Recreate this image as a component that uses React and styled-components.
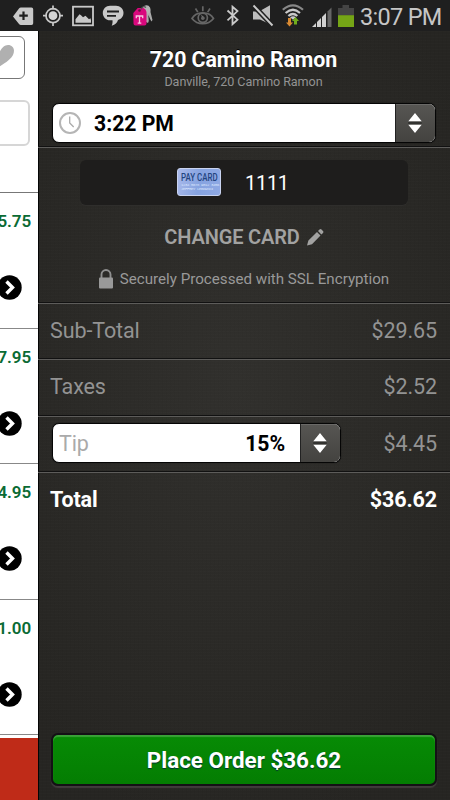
import React from 'react'
import styled, { createGlobalStyle } from 'styled-components'

const GlobalStyle = createGlobalStyle`
  * {
    box-sizing: border-box;
  }
  body {
    margin: 0;
    background: #1e1e1e;
    font-family: Roboto, 'Liberation Sans', sans-serif;
  }
`

const Screen = styled.div`
  width: 450px;
  height: 800px;
  overflow: hidden;
  display: flex;
  flex-direction: column;
`

const StatusBar = styled.header`
  height: 31px;
  flex: none;
  display: flex;
  align-items: flex-start;
  background: #1f1f1f;
  padding-left: 12px;
`

const StatusIcon = styled.svg`
  display: block;
  flex: none;
  width: ${({ $w }) => $w}px;
  height: 31px;
  margin-right: ${({ $gap }) => $gap}px;
`

const Clock = styled.span`
  font-size: 23.5px;
  line-height: 34px;
  color: #c6c6c6;
  white-space: nowrap;
  letter-spacing: -0.7px;
`

const Body = styled.div`
  flex: 1;
  min-height: 0;
  display: flex;
`

const Drawer = styled.aside`
  width: 38px;
  flex: none;
  overflow: hidden;
  background: #fff;
  display: flex;
  flex-direction: column;
`

const DrawerTop = styled.div`
  height: 162px;
  flex: none;
  padding-top: 5px;
  border-bottom: 1px solid #777;
`

const FavButton = styled.div`
  width: 36px;
  height: 43px;
  margin-left: -11px;
  border: 1px solid #777;
  border-radius: 6px;
  display: flex;
  justify-content: flex-end;
  padding: 8px 10px 0 0;
`

const SearchField = styled.div`
  width: 50px;
  height: 46px;
  margin: 21px 0 0 -20px;
  border: 2px solid #d6d6d6;
  border-radius: 6px;
`

const Item = styled.div`
  height: 135.5px;
  flex: none;
  display: flex;
  flex-direction: column;
  align-items: flex-end;
  border-bottom: 1px solid #888;
  padding: 17px 7px 0 0;
`

const Price = styled.div`
  font-size: 17px;
  line-height: 23px;
  font-weight: 600;
  letter-spacing: -0.1px;
  color: #0a6b34;
  white-space: nowrap;
`

const ArrowIcon = styled.svg`
  display: block;
  width: 25px;
  height: 25px;
  margin: 42px 9px 0 0;
  flex: none;
`

const DrawerFooter = styled.div`
  flex: 1;
  margin-top: 3px;
  background: #bf2b18;
`

const Panel = styled.main`
  flex: 1;
  display: flex;
  flex-direction: column;
  box-shadow: inset 1px 0 0 #050505;
  background-color: #2a2926;
  background-image: repeating-linear-gradient(0deg, rgba(255, 255, 255, 0.008) 0 1px, transparent 1px 3px),
    repeating-linear-gradient(90deg, rgba(0, 0, 0, 0.025) 0 1px, transparent 1px 4px),
    radial-gradient(ellipse 70% 60% at 48% 46%, #31302d, #262522);
`

const Section = styled.section`
  height: ${({ $h }) => $h}px;
  flex: none;
  display: flex;
  flex-direction: column;
  align-items: center;
  border-bottom: 1px solid #111;
  box-shadow: 0 1px 0 #5d5c5a;
`

const Title = styled.h1`
  margin: 14px 0 0;
  padding-right: 1px;
  font-size: 21.4px;
  line-height: 29px;
  font-weight: 700;
  color: #fff;
  text-shadow: 0 -1px 0 #000;
  letter-spacing: -0.1px;
`

const Subtitle = styled.div`
  padding-right: 1px;
  font-size: 12.6px;
  line-height: 16px;
  color: #939393;
  letter-spacing: -0.08px;
`

const Select = styled.div`
  width: ${({ $w }) => $w}px;
  height: 40px;
  display: flex;
  border: 1px solid #050505;
  border-radius: 7px;
  overflow: hidden;
  background: #fff;
  box-shadow: 0 0 1px #000;
`

const TimeSelect = styled(Select)`
  margin-top: 13px;
`

const SelectValue = styled.div`
  flex: 1;
  display: flex;
  align-items: center;
  justify-content: ${({ $spread }) => ($spread ? 'space-between' : 'flex-start')};
  padding: 0 ${({ $spread }) => ($spread ? 15 : 0)}px 0 6px;
  font-size: 21.2px;
  font-weight: 700;
  color: #000;
`

const Placeholder = styled.span`
  font-weight: 400;
  font-size: 21.5px;
  color: #aaa;
`

const TimeText = styled.span`
  margin-left: 13px;
  padding-top: 1px;
`

const Stepper = styled.div`
  width: 40px;
  border-left: 1px solid #222;
  background: linear-gradient(#575653, #444340);
  box-shadow: inset 0 1px 0 #6a6967;
  display: flex;
  align-items: center;
  justify-content: center;
  padding-right: 2px;
`

const CardBox = styled.div`
  width: 328px;
  height: 45px;
  margin-top: 13px;
  border-radius: 6px;
  background: #1e1d1c;
  box-shadow: 0 1px 0 #2f2e2c;
  display: flex;
  align-items: center;
  padding-left: 97px;
`

const PayCard = styled.div`
  width: 44px;
  height: 28px;
  margin-top: -1px;
  border: 1px solid #c9d3f0;
  border-radius: 3px;
  background: linear-gradient(100deg, #a9b9ea, #86a3e0 50%, #8fa9e4);
  padding: 3px 0 0 3px;
  overflow: hidden;
  white-space: nowrap;
`

const PayName = styled.div`
  width: 50px;
  font-size: 11px;
  line-height: 11px;
  font-weight: 500;
  color: #23447f;
  transform: scaleX(0.72);
  transform-origin: left;
`

const PayDigits = styled.div`
  height: 4px;
  font: 4px/5px 'Liberation Mono', monospace;
  letter-spacing: -0.4px;
  color: #d8e2fb;
`

const CardNumber = styled.span`
  margin-left: 24px;
  padding-top: 1px;
  font-size: 20px;
  letter-spacing: -0.3px;
  color: #fff;
`

const ChangeCard = styled.div`
  display: flex;
  align-items: center;
  margin-top: 18px;
  line-height: 29px;
  font-size: 20px;
  font-weight: 600;
  letter-spacing: -0.15px;
  color: #a2a2a1;
`

const Secure = styled.div`
  display: flex;
  align-items: center;
  margin-top: 15px;
  height: 24px;
  font-size: 15.15px;
  color: #999;
`

const Row = styled.div`
  height: 56.3px;
  flex: none;
  display: flex;
  align-items: center;
  justify-content: space-between;
  padding: 0 13px 0 ${({ $field }) => ($field ? 14 : 12)}px;
  border-bottom: ${({ $last }) => ($last ? 'none' : '1px solid #111')};
  box-shadow: ${({ $last }) => ($last ? 'none' : '0 1px 0 #5d5c5a')};
  font-size: 21.5px;
  font-weight: ${({ $last }) => ($last ? 700 : 400)};
  letter-spacing: -0.1px;
  color: ${({ $last }) => ($last ? '#fff' : '#939393')};
  padding-bottom: ${({ $last }) => ($last ? 2 : 0)}px;
`

const OrderButton = styled.button`
  width: 386px;
  height: 53px;
  margin: auto auto 14px 13px;
  padding: 0;
  border: 2px solid #141015;
  border-radius: 7px;
  background: linear-gradient(#078b05, #047d02);
  box-shadow: inset 0 2px 1px #3aa238, 0 2px 1px #413c3c;
  font: 700 22.4px Roboto, sans-serif;
  color: #fff;
  text-shadow: 0 1px 1px #033;
`

const UpDown = () => (
  <svg width="14" height="20" viewBox="0 0 14 20">
    <path d="M7 0l6.7 8.2H.3zM7 20l6.7-8.2H.3z" fill="#fff" />
    <path d="M.3 9.5h13.4v1H.3z" fill="#191816" />
  </svg>
)

const StatusIcons = () => (
  <>
    <StatusIcon $w={22} $gap={9} viewBox="0 0 22 31">
      <path d="M1 16.5L7 8.5Q7.7 7.6 9 7.6h10.5q1.7 0 1.7 1.7v14q0 1.7-1.7 1.7H9q-1.3 0-2-.9z" fill="#c9c9c9" />
      <path d="M11.5 11.5v8.5M7.3 15.7h8.5" stroke="#1f1f1f" strokeWidth="2.2" />
    </StatusIcon>
    <StatusIcon $w={20} $gap={9} viewBox="0 0 20 31">
      <circle cx="10" cy="15.7" r="7" fill="none" stroke="#c9c9c9" strokeWidth="1.7" />
      <circle cx="10" cy="15.7" r="4.4" fill="#d4d4d4" />
      <path d="M10 5.5v4M10 22v4M0 15.7h4M16 15.7h4" stroke="#c9c9c9" strokeWidth="1.7" />
    </StatusIcon>
    <StatusIcon $w={22} $gap={8} viewBox="0 0 22 31">
      <rect x="1" y="6.7" width="20" height="18.6" fill="none" stroke="#c9c9c9" strokeWidth="1.8" />
      <path d="M3.5 22.8v-3.500l4-5 1.500 1 2 2 2.500-1.500 3.500 3.500 1.500-1 .5 2v2.500z" fill="#c9c9c9" />
    </StatusIcon>
    <StatusIcon $w={22} $gap={8} viewBox="0 0 22 31">
      <path d="M8 5.800h6c4 0 7.500 3 7.500 7s-2.500 6.500-5.500 7.200c-1 2.800-2.500 4.700-6.300 5.800.8-1.800 1-3.500.8-5.500H8c-4 0-7.200-3.300-7.200-7.300S4 5.800 8 5.800z" fill="#c9c9c9" />
      <path d="M5 11.500h12M5 15.800h9" stroke="#1f1f1f" strokeWidth="1.800" />
    </StatusIcon>
    <StatusIcon $w={21} $gap={38} viewBox="0 0 21 31">
      <path d="M13.500 12l.5 10 2 1 .8-2-.5-6 3 6.500 1.200-1.500L18 10z" fill="#aaa" />
      <path d="M12 6q4-2 6 1.500 1.500 3.500-1 6l-4 .5-2.500-4q-.5-2.500 1.500-4z" fill="#b4b4b4" />
      <path d="M1.300 13L5.700 8h5.800q2.500 1 3 4v11.500q0 2-2 2h-9q-2 0-2-2z" fill="#d9087d" />
      <circle cx="7.500" cy="10.500" r="1.300" fill="#67113f" />
      <path d="M9 9.500q2-4.500 5-2" fill="none" stroke="#555" strokeWidth="1.200" />
      <path d="M4.300 18.300V16h6.400v2.300M7.500 16v7.200M5.700 23.200h3.600" stroke="#f6c6df" strokeWidth="1.300" fill="none" />
    </StatusIcon>
    <StatusIcon $w={24} $gap={11} viewBox="0 0 24 31">
      <g fill="none" stroke="#666" strokeWidth="1.700">
        <path d="M1 18.500C5 11 18.500 11 22.500 18.500 17 25.500 6.500 25.500 1 18.500zM11.800 6.200v5M4.500 8.500l2.300 3.600M19 8.500l-2.300 3.600" />
        <circle cx="11.800" cy="17.800" r="4.600" />
      </g>
      <path d="M10 14.500l3.500 3-1.700 2.200z" fill="#777" />
      <circle cx="11.800" cy="18.300" r="1.800" fill="#666" />
    </StatusIcon>
    <StatusIcon $w={14} $gap={12} viewBox="0 0 14 31">
      <path d="M1.500 10.500l10 9.200-5 4.500V6.800l5 4.300-10 9.200" fill="none" stroke="#c9c9c9" strokeWidth="1.800" />
    </StatusIcon>
    <StatusIcon $w={22} $gap={8} viewBox="0 0 22 31">
      <path d="M1 11.500h6L18 5.200v19L8 19.500H1z" fill="#bdbdbd" />
      <path d="M1.500 5.500l19 20" stroke="#1f1f1f" strokeWidth="5" />
      <path d="M1.500 5.500l19 20" stroke="#c9c9c9" strokeWidth="1.900" />
    </StatusIcon>
    <StatusIcon $w={22} $gap={8} viewBox="0 0 22 31">
      <g fill="none" strokeWidth="2.200">
        <path d="M.8 9.800Q11 .8 21 9.800" stroke="#888" />
        <path d="M3.600 13Q11 6.500 18 13" stroke="#c9c9c9" />
        <path d="M6.400 16Q11 12 15.300 16" stroke="#c9c9c9" />
      </g>
      <path d="M8 17.200q3-2 6 0l-3 2.500z" fill="#c9c9c9" />
      <path d="M6 18h3v4.500h2l-3.500 4-3.500-4h2z" fill="#d98a32" />
      <path d="M12 24.500h3V21h2l-3.500-4-3.500 4h2z" fill="#71ad1c" />
    </StatusIcon>
    <StatusIcon $w={20} $gap={6} viewBox="0 0 20 31">
      <path d="M0 27l4-4v4zM5 22l4-4v9H5zM10 17l4-4v14h-4z" fill="#d0d0d0" />
      <path d="M15.500 11.500l4-4V27h-4z" fill="#666" />
    </StatusIcon>
    <StatusIcon $w={16} $gap={6} viewBox="0 0 16 31">
      <path d="M0 8h4.500V5h6.500v3h5v7.500H0z" fill="#444" />
      <path d="M0 15.200h16V27H0z" fill="#75a516" />
    </StatusIcon>
  </>
)

const prices = ['5.75', '7.95', '4.95', '1.00']

const App = () => (
  <Screen>
    <GlobalStyle />
    <StatusBar>
      <StatusIcons />
      <Clock>3:07 PM</Clock>
    </StatusBar>
    <Body>
      <Drawer>
        <DrawerTop>
          <FavButton>
            <svg width="25" height="24" viewBox="0 0 25 24" style={{ flex: 'none' }}>
              <path d="M7.500 23C0 18-4 9 1 4c4-3 7-1 9 4 2-4 5-8 9-8 5 0 7.500 4.500 5 10-2 4-8.500 9-16.500 13z" fill="#b0b0b0" />
            </svg>
          </FavButton>
          <SearchField />
        </DrawerTop>
        {prices.map((price) => (
          <Item key={price}>
            <Price>{price}</Price>
            <ArrowIcon viewBox="0 0 25 25">
              <circle cx="12.500" cy="12.500" r="12.200" fill="#000" />
              <path d="M9.500 6.500l6 6-6 6" fill="none" stroke="#fff" strokeWidth="3.400" />
            </ArrowIcon>
          </Item>
        ))}
        <DrawerFooter />
      </Drawer>
      <Panel>
        <Section $h={116}>
          <Title>720 Camino Ramon</Title>
          <Subtitle>Danville, 720 Camino Ramon</Subtitle>
          <TimeSelect $w={384}>
            <SelectValue>
              <svg width="22" height="22" viewBox="0 0 22 22">
                <circle cx="11" cy="11" r="10" fill="none" stroke="#b5b5b5" strokeWidth="2" />
                <path d="M10.700 4.500V11l4 4" fill="none" stroke="#aaa" strokeWidth="1.300" />
              </svg>
              <TimeText>3:22 PM</TimeText>
            </SelectValue>
            <Stepper>
              <UpDown />
            </Stepper>
          </TimeSelect>
        </Section>
        <Section $h={156}>
          <CardBox>
            <PayCard>
              <PayName>PAY CARD</PayName>
              <PayDigits>1234 5678 9012 3456</PayDigits>
              <PayDigits>JEFFREY LEBOWSKI</PayDigits>
            </PayCard>
            <CardNumber>1111</CardNumber>
          </CardBox>
          <ChangeCard>
            CHANGE CARD
            <svg width="17" height="17" viewBox="0 0 17 17" style={{ marginLeft: 7 }}>
              <path d="M0 16.500l1.400-5L10 3l3.500 3.500L5 15.200zM11 2l1.500-1.500q1-.8 2 0L16 2q.8 1 0 2l-1.600 1.500z" fill="#a2a2a1" />
            </svg>
          </ChangeCard>
          <Secure>
            <svg width="14" height="20" viewBox="0 0 14 20" style={{ marginRight: 7 }}>
              <path d="M2.500 9V5.500a4.500 4.500 0 019 0V9" fill="none" stroke="#8f8f8f" strokeWidth="1.900" />
              <rect y="8.500" width="14" height="11" rx="1" fill="#999" />
            </svg>
            Securely Processed with SSL Encryption
          </Secure>
        </Section>
        <Row>
          <span>Sub-Total</span>
          <span>$29.65</span>
        </Row>
        <Row>
          <span>Taxes</span>
          <span>$2.52</span>
        </Row>
        <Row $field>
          <Select $w={289}>
            <SelectValue $spread>
              <Placeholder>Tip</Placeholder>
              <span>15%</span>
            </SelectValue>
            <Stepper>
              <UpDown />
            </Stepper>
          </Select>
          <span>$4.45</span>
        </Row>
        <Row $last>
          <span>Total</span>
          <span>$36.62</span>
        </Row>
        <OrderButton>Place Order $36.62</OrderButton>
      </Panel>
    </Body>
  </Screen>
)

export default App
